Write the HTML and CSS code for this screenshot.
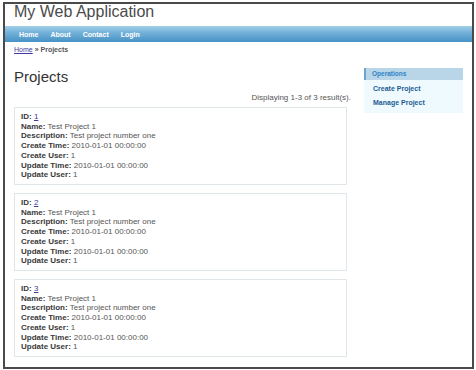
FILE: index.html
```html
<!DOCTYPE html>
<html lang="en">
<head>
  <meta charset="UTF-8" />
  <title>My Web Application - Projects</title>
  <link rel="stylesheet" href="styles.css">
</head>
<body>
  <div class="frame">
    <div class="header">My Web Application</div>

    <div class="mainmenu">
      <a href="#">Home</a>
      <a href="#">About</a>
      <a href="#">Contact</a>
      <a href="#">Login</a>
    </div>

    <div class="breadcrumbs"><a href="#">Home</a> &raquo; <span>Projects</span></div>

    <div class="main">
      <div class="content">
        <h1>Projects</h1>
        <div class="summary">Displaying 1-3 of 3 result(s).</div>

        <div class="view">
          <b>ID:</b> <a href="#">1</a><br />
          <b>Name:</b> Test Project 1<br />
          <b>Description:</b> Test project number one<br />
          <b>Create Time:</b> 2010-01-01 00:00:00<br />
          <b>Create User:</b> 1<br />
          <b>Update Time:</b> 2010-01-01 00:00:00<br />
          <b>Update User:</b> 1
        </div>

        <div class="view">
          <b>ID:</b> <a href="#">2</a><br />
          <b>Name:</b> Test Project 1<br />
          <b>Description:</b> Test project number one<br />
          <b>Create Time:</b> 2010-01-01 00:00:00<br />
          <b>Create User:</b> 1<br />
          <b>Update Time:</b> 2010-01-01 00:00:00<br />
          <b>Update User:</b> 1
        </div>

        <div class="view">
          <b>ID:</b> <a href="#">3</a><br />
          <b>Name:</b> Test Project 1<br />
          <b>Description:</b> Test project number one<br />
          <b>Create Time:</b> 2010-01-01 00:00:00<br />
          <b>Create User:</b> 1<br />
          <b>Update Time:</b> 2010-01-01 00:00:00<br />
          <b>Update User:</b> 1
        </div>
      </div>

      <div class="sidebar">
        <div class="portlet-title">Operations</div>
        <ul class="operations">
          <li><a href="#">Create Project</a></li>
          <li><a href="#">Manage Project</a></li>
        </ul>
      </div>
    </div>
  </div>
</body>
</html>
```

FILE: styles.css
```css
* {
  margin: 0;
  padding: 0;
  box-sizing: border-box;
}
body {
  font-family: 'Liberation Sans', Arial, sans-serif;
  background: white;
  padding: 2px 2px 1px 3px;
  color: #555;
}
.frame {
  border: 2px solid #4a4a4a;
  height: 367px;
  overflow: hidden;
  background: white;
}
.header {
  height: 22px;
  padding-left: 9px;
  font-size: 16px;
  line-height: 16px;
  color: #4b4b4b;
}
.mainmenu {
  height: 16px;
  padding-left: 8px;
  display: flex;
  align-items: center;
  background: linear-gradient(#a3cfe7, #78b5db 35%, #4792c5);
}
.mainmenu a {
  color: white;
  font-weight: bold;
  font-size: 7px;
  text-decoration: none;
  padding: 0 6px;
}
.breadcrumbs {
  margin-top: 3px;
  padding-left: 9px;
  font-size: 7px;
  line-height: 9px;
  font-weight: bold;
  color: #555;
}
.breadcrumbs a {
  font-weight: normal;
  color: #3d3a9c;
}
.main {
  display: flex;
  gap: 13px;
  padding: 0 9px;
}
.content {
  width: 337px;
}
h1 {
  margin-top: 14px;
  font-size: 15px;
  line-height: 18px;
  font-weight: normal;
  color: #333;
}
.summary {
  margin: 7px 0 4px;
  text-align: right;
  font-size: 8px;
  line-height: 10px;
  color: #555;
}
.view {
  width: 333px;
  height: 78px;
  margin-bottom: 8px;
  padding: 4px 6px;
  border: 1px solid #dee6ea;
  font-size: 8px;
  line-height: 9.7px;
  color: #555;
}
.view b {
  color: #3a3a3a;
}
.view a {
  color: #3d3a9c;
}
.sidebar {
  width: 99px;
  height: 45px;
  margin-top: 14px;
  background: #eefafe;
}
.portlet-title {
  height: 12px;
  padding-left: 6px;
  border-left: 2px solid #6aa4cf;
  background: #b9d6e8;
  font-size: 6.5px;
  line-height: 12px;
  font-weight: bold;
  color: #2d84c6;
}
.operations {
  list-style: none;
  margin-top: 2px;
  padding-left: 9px;
}
.operations li {
  font-size: 7px;
  line-height: 13.7px;
}
.operations a {
  font-weight: bold;
  color: #1d5a92;
  text-decoration: none;
}
```
